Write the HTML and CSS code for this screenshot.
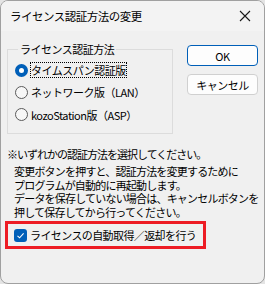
FILE: index.html
```html
<!DOCTYPE html>
<html lang="ja">

<head>
    <meta charset="UTF-8">
    <meta name="viewport" content="width=device-width, initial-scale=1.0">
    <title>ライセンス認証方法の変更</title>
    <link rel="stylesheet" href="styles.css">
</head>

<body>
    <div class="window">
        <div class="titlebar">
            <span class="title">ライセンス認証方法の変更</span>
            <svg class="close" width="12" height="12" viewBox="0 0 12 12">
                <path d="M1 1L11 11M11 1L1 11" stroke="#1a1a1a" stroke-width="1.1" fill="none" />
            </svg>
        </div>

        <div class="content">
            <div class="top-row">
                <fieldset class="group">
                    <legend>ライセンス認証方法</legend>
                    <label class="radio-row">
                        <span class="radio checked"></span>
                        <span class="focus">タイムスパン認証版</span>
                    </label>
                    <label class="radio-row">
                        <span class="radio"></span>
                        <span>ネットワーク版（LAN）</span>
                    </label>
                    <label class="radio-row">
                        <span class="radio"></span>
                        <span>kozoStation版（ASP）</span>
                    </label>
                </fieldset>

                <div class="buttons">
                    <div class="btn default">OK</div>
                    <div class="btn">キャンセル</div>
                </div>
            </div>

            <p class="note">※いずれかの認証方法を選択してください。</p>
            <div class="desc">
                <span>変更ボタンを押すと、認証方法を変更するために</span>
                <span>プログラムが自動的に再起動します。</span>
                <span>データを保存していない場合は、キャンセルボタンを</span>
                <span>押して保存してから行ってください。</span>
            </div>

            <div class="highlight">
                <span class="checkbox">
                    <svg width="13" height="13" viewBox="0 0 13 13">
                        <path d="M3.5 6.8L5.6 8.8L9.6 4.4" stroke="#fff" stroke-width="1.1" fill="none" />
                    </svg>
                </span>
                <span>ライセンスの自動取得／返却を行う</span>
            </div>
        </div>
    </div>
</body>

</html>
```

FILE: styles.css
```css
body {
    margin: 0;
    background: #e4e4e4;
    font-family: "Noto Sans CJK JP", "Noto Sans", sans-serif;
    font-size: 11px;
    color: #000;
}

.window {
    width: 265px;
    height: 284px;
    box-sizing: border-box;
    border: 1px solid #a0a0a0;
    border-radius: 8px;
    background: #f0f0f0;
    overflow: hidden;
}

.titlebar {
    height: 30px;
    display: flex;
    align-items: center;
    justify-content: space-between;
    padding: 0 13px 0 9px;
    background: #f3f3f3;
}

.title {
    font-size: 11.5px;
    letter-spacing: -0.5px;
}

.content {
    display: flex;
    flex-direction: column;
}

.top-row {
    display: flex;
    flex-direction: row;
    margin-top: 10px;
}

/* グループボックス */
.group {
    width: 166px;
    height: 93px;
    box-sizing: border-box;
    margin: 0 0 0 6px;
    padding: 2px 0 0 7px;
    border: 1px solid #dcdcdc;
    display: flex;
    flex-direction: column;
}

.group legend {
    padding: 0 2px;
    margin-left: 3px;
    line-height: 16px;
    letter-spacing: -0.5px;
}

.radio-row {
    display: flex;
    align-items: center;
    height: 22.3px;
    letter-spacing: -0.5px;
}

.radio {
    width: 13px;
    height: 13px;
    box-sizing: border-box;
    border: 1px solid #5a5a5a;
    border-radius: 50%;
    background: #f7f7f7;
    margin-right: 3px;
    flex: none;
}

.radio.checked {
    border: 4px solid #005fb8;
    background: #fff;
}

.focus {
    outline: 1px dotted #000;
    line-height: 14px;
}

.buttons {
    display: flex;
    flex-direction: column;
    gap: 8px;
    margin: 4px 0 0 14px;
}

.btn {
    width: 71px;
    height: 21px;
    box-sizing: border-box;
    border: 1px solid #d0d0d0;
    border-radius: 4px;
    background: #fdfdfd;
    display: flex;
    align-items: center;
    justify-content: center;
    letter-spacing: -0.5px;
}

.btn.default {
    border-color: #005fb8;
}

.note {
    margin: 12px 0 0 6px;
    line-height: 16px;
    letter-spacing: -1px;
}

.desc {
    display: flex;
    flex-direction: column;
    margin: 3px 0 0 13px;
    white-space: nowrap;
    letter-spacing: -0.8px;
}

.desc span {
    height: 13.6px;
    line-height: 13.6px;
}

/* 赤枠 */
.highlight {
    width: 201px;
    height: 28px;
    box-sizing: border-box;
    margin: 2px 0 0 4px;
    border: 3px solid #ed1c24;
    display: flex;
    align-items: center;
    padding-left: 6px;
    letter-spacing: -0.6px;
}

.checkbox {
    width: 13px;
    height: 13px;
    border-radius: 3px;
    background: #005fb8;
    margin-right: 3px;
    display: flex;
}
```
